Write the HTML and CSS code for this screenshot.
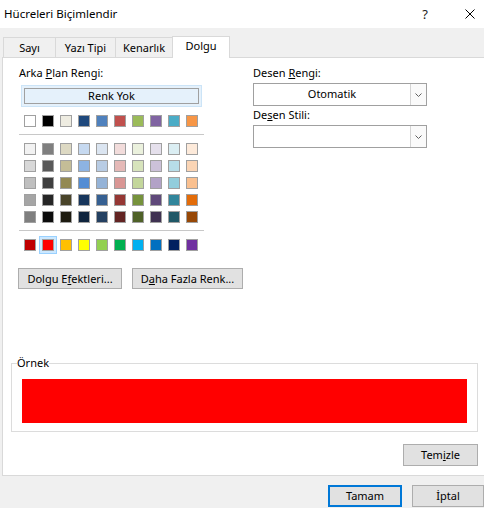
FILE: index.html
```
<!DOCTYPE html>
<html lang="tr">
<head>
<meta charset="utf-8">
<title>Hücreleri Biçimlendir</title>
<link rel="stylesheet" href="styles.css">
</head>
<body>
<div class="dialog">
  <div class="titlebar">
    <span class="title">Hücreleri Biçimlendir</span>
    <span class="help">?</span>
    <svg class="close" width="10" height="10" viewBox="0 0 10 10"><path d="M0.5 0.5 L9.5 9.5 M9.5 0.5 L0.5 9.5" stroke="#000" stroke-width="1" fill="none"/></svg>
  </div>
  <div class="tabs">
    <div class="tab">Sayı</div>
    <div class="tab tab-w2">Yazı Tipi</div>
    <div class="tab tab-w3">Kenarlık</div>
    <div class="tab tab-active">Dolgu</div>
  </div>
  <div class="panel">
    <div class="cols">
      <div class="col-left">
        <div class="label">Arka <u>P</u>lan Rengi:</div>
        <div class="nocolor"><div class="nocolor-inner">Renk Yok</div></div>
        <div class="swrow mt8">
          <span class="sw" style="background:#ffffff"></span>
          <span class="sw" style="background:#000000"></span>
          <span class="sw" style="background:#eeece1"></span>
          <span class="sw" style="background:#1f497d"></span>
          <span class="sw" style="background:#4f81bd"></span>
          <span class="sw" style="background:#c0504d"></span>
          <span class="sw" style="background:#9bbb59"></span>
          <span class="sw" style="background:#8064a2"></span>
          <span class="sw" style="background:#4bacc6"></span>
          <span class="sw" style="background:#f79646"></span>
        </div>
        <div class="sep"></div>
        <div class="grid">
          <div class="swrow">
            <span class="sw" style="background:#f2f2f2"></span>
            <span class="sw" style="background:#7f7f7f"></span>
            <span class="sw" style="background:#ddd9c3"></span>
            <span class="sw" style="background:#c6d9f0"></span>
            <span class="sw" style="background:#dbe5f1"></span>
            <span class="sw" style="background:#f2dcdb"></span>
            <span class="sw" style="background:#ebf1dd"></span>
            <span class="sw" style="background:#e5e0ec"></span>
            <span class="sw" style="background:#dbeef3"></span>
            <span class="sw" style="background:#fdeada"></span>
          </div>
          <div class="swrow">
            <span class="sw" style="background:#d8d8d8"></span>
            <span class="sw" style="background:#595959"></span>
            <span class="sw" style="background:#c4bd97"></span>
            <span class="sw" style="background:#8db3e2"></span>
            <span class="sw" style="background:#b8cce4"></span>
            <span class="sw" style="background:#e5b9b7"></span>
            <span class="sw" style="background:#d7e3bc"></span>
            <span class="sw" style="background:#ccc1d9"></span>
            <span class="sw" style="background:#b7dde8"></span>
            <span class="sw" style="background:#fbd5b5"></span>
          </div>
          <div class="swrow">
            <span class="sw" style="background:#bfbfbf"></span>
            <span class="sw" style="background:#3f3f3f"></span>
            <span class="sw" style="background:#938953"></span>
            <span class="sw" style="background:#548dd4"></span>
            <span class="sw" style="background:#95b3d7"></span>
            <span class="sw" style="background:#d99694"></span>
            <span class="sw" style="background:#c3d69b"></span>
            <span class="sw" style="background:#b2a2c7"></span>
            <span class="sw" style="background:#92cddc"></span>
            <span class="sw" style="background:#fac08f"></span>
          </div>
          <div class="swrow">
            <span class="sw" style="background:#a5a5a5"></span>
            <span class="sw" style="background:#262626"></span>
            <span class="sw" style="background:#494429"></span>
            <span class="sw" style="background:#17365d"></span>
            <span class="sw" style="background:#366092"></span>
            <span class="sw" style="background:#953734"></span>
            <span class="sw" style="background:#76923c"></span>
            <span class="sw" style="background:#5f497a"></span>
            <span class="sw" style="background:#31859b"></span>
            <span class="sw" style="background:#e36c09"></span>
          </div>
          <div class="swrow">
            <span class="sw" style="background:#7f7f7f"></span>
            <span class="sw" style="background:#0c0c0c"></span>
            <span class="sw" style="background:#1d1b10"></span>
            <span class="sw" style="background:#0f243e"></span>
            <span class="sw" style="background:#244061"></span>
            <span class="sw" style="background:#632423"></span>
            <span class="sw" style="background:#4f6128"></span>
            <span class="sw" style="background:#3f3151"></span>
            <span class="sw" style="background:#205867"></span>
            <span class="sw" style="background:#974806"></span>
          </div>
        </div>
        <div class="sep"></div>
        <div class="swrow mt8">
          <span class="sw" style="background:#c00000"></span>
          <span class="sw sw-selected" style="background:#ff0000"></span>
          <span class="sw" style="background:#ffc000"></span>
          <span class="sw" style="background:#ffff00"></span>
          <span class="sw" style="background:#92d050"></span>
          <span class="sw" style="background:#00b050"></span>
          <span class="sw" style="background:#00b0f0"></span>
          <span class="sw" style="background:#0070c0"></span>
          <span class="sw" style="background:#002060"></span>
          <span class="sw" style="background:#7030a0"></span>
        </div>
        <div class="btnrow">
          <button class="btn btn-effects">Dolgu E<u>f</u>ektleri...</button>
          <button class="btn btn-more">D<u>a</u>ha Fazla Renk...</button>
        </div>
      </div>
      <div class="col-right">
        <div class="label">Desen <u>R</u>engi:</div>
        <div class="combo combo-first">
          <span class="combo-text">Otomatik</span>
          <span class="combo-arrow"><svg width="7" height="4" viewBox="0 0 7 4"><path d="M0.5 0.5 L3.5 3.5 L6.5 0.5" stroke="#606060" stroke-width="1" fill="none"/></svg></span>
        </div>
        <div class="label label-second">De<u>s</u>en Stili:</div>
        <div class="combo combo-second">
          <span class="combo-text"></span>
          <span class="combo-arrow"><svg width="7" height="4" viewBox="0 0 7 4"><path d="M0.5 0.5 L3.5 3.5 L6.5 0.5" stroke="#606060" stroke-width="1" fill="none"/></svg></span>
        </div>
      </div>
    </div>
    <fieldset class="sample">
      <legend>Örnek</legend>
      <div class="sample-fill"></div>
    </fieldset>
    <button class="btn btn-clear">Tem<u>i</u>zle</button>
  </div>
  <div class="footer">
    <button class="btn btn-ok">Tamam</button>
    <button class="btn btn-cancel">İptal</button>
  </div>
</div>
</body>
</html>
```
FILE: styles.css
```
* { box-sizing: border-box; }
html, body { margin: 0; padding: 0; }
body {
  width: 484px;
  height: 508px;
  overflow: hidden;
  background: #f0f0f0;
  font-family: "Noto Sans", "Open Sans", sans-serif;
  font-size: 11px;
  line-height: 16px;
  color: #000;
}
.dialog { width: 484px; height: 508px; }
u { text-decoration: underline; text-underline-offset: 1px; }

.titlebar {
  height: 28px;
  background: #fff;
  display: flex;
  align-items: center;
  padding: 0 9px 0 4px;
}
.title { flex: 1; font-size: 11.5px; }
.help { font-size: 13px; margin-right: 37px; color: #222; }
.close { display: block; }

.tabs {
  height: 29px;
  display: flex;
  align-items: flex-end;
  padding-left: 3px;
}
.tab {
  width: 52px;
  height: 20px;
  border-top: 1px solid #d9d9d9;
  border-left: 1px solid #d9d9d9;
  text-align: center;
  line-height: 18px;
  padding-top: 1px;
}
.tab-w2 { width: 60px; }
.tab-w3 { width: 57px; }
.tab-active {
  width: 58px;
  height: 22px;
  background: #fff;
  border-right: 1px solid #d9d9d9;
  margin-bottom: -1px;
  position: relative;
  z-index: 1;
  padding-top: 0;
}

.panel {
  margin-left: 2px;
  height: 419px;
  background: #fff;
  border: 1px solid #d9d9d9;
  border-right: none;
  display: flex;
  flex-direction: column;
  padding: 7px 0 9px 0;
}
.cols { display: flex; margin-left: 16px; gap: 49px; }
.col-left { width: 185px; flex-shrink: 0; display: flex; flex-direction: column; }
.col-right { width: 174px; flex-shrink: 0; display: flex; flex-direction: column; }

.label { height: 16px; }

.nocolor {
  margin: 4px 0 0 2px;
  width: 181px;
  height: 22px;
  border: 1px solid #cce4f7;
  background: #e5f1fb;
  padding: 2px;
}
.nocolor-inner {
  height: 16px;
  border: 1px solid #a0a0a0;
  text-align: center;
  line-height: 14px;
}

.swrow { display: flex; gap: 6px; margin-left: 5px; height: 12px; }
.mt8 { margin-top: 8px; }
.sw {
  display: block;
  width: 12px;
  height: 12px;
  border: 1px solid #a0a0a0;
}
.sw-selected {
  box-shadow: 0 0 0 2px #cce8ff, 0 0 0 3px #99d1ff;
}
.sep { height: 1px; background: #c8c8c8; margin-top: 7px; }
.grid { display: flex; flex-direction: column; gap: 5px; margin-top: 8px; }

.btn {
  font-family: inherit;
  font-size: 11px;
  line-height: 16px;
  color: #000;
  background: #e1e1e1;
  border: 1px solid #adadad;
  padding: 0;
  margin: 0;
  height: 21px;
  white-space: nowrap;
  flex-shrink: 0;
}
.btnrow { display: flex; gap: 10px; margin: 17px 0 0 -1px; width: 225px; }
.btn-effects { width: 104px; }
.btn-more { width: 111px; }

.combo {
  height: 23px;
  border: 1px solid #a0a0a0;
  background: #fff;
  display: flex;
  margin-top: 2px;
}
.combo-text { flex: 1; text-align: center; line-height: 20px; }
.combo-arrow {
  width: 16px;
  border-left: 1px solid #d4d4d4;
  background: #fafafa;
  display: flex;
  align-items: center;
  justify-content: center;
  padding-top: 1px;
}
.label-second { margin-top: 1px; }

.sample {
  margin: 66px 6px 0 8px;
  padding: 8px 10px 8px 5px;
  border: 1px solid #dcdcdc;
  min-width: 0;
}
.sample legend { padding: 0; line-height: 16px; }
.sample-fill { height: 44px; background: #ff0000; margin-left: 5px; }

.btn-clear {
  align-self: flex-end;
  margin: 12px 6px 0 0;
  width: 75px;
  height: 22px;
}

.footer {
  display: flex;
  justify-content: flex-end;
  gap: 10px;
  padding-top: 9px;
}
.btn-ok { width: 74px; height: 22px; border: 2px solid #0078d7; }
.btn-cancel { width: 72px; height: 22px; }
```
